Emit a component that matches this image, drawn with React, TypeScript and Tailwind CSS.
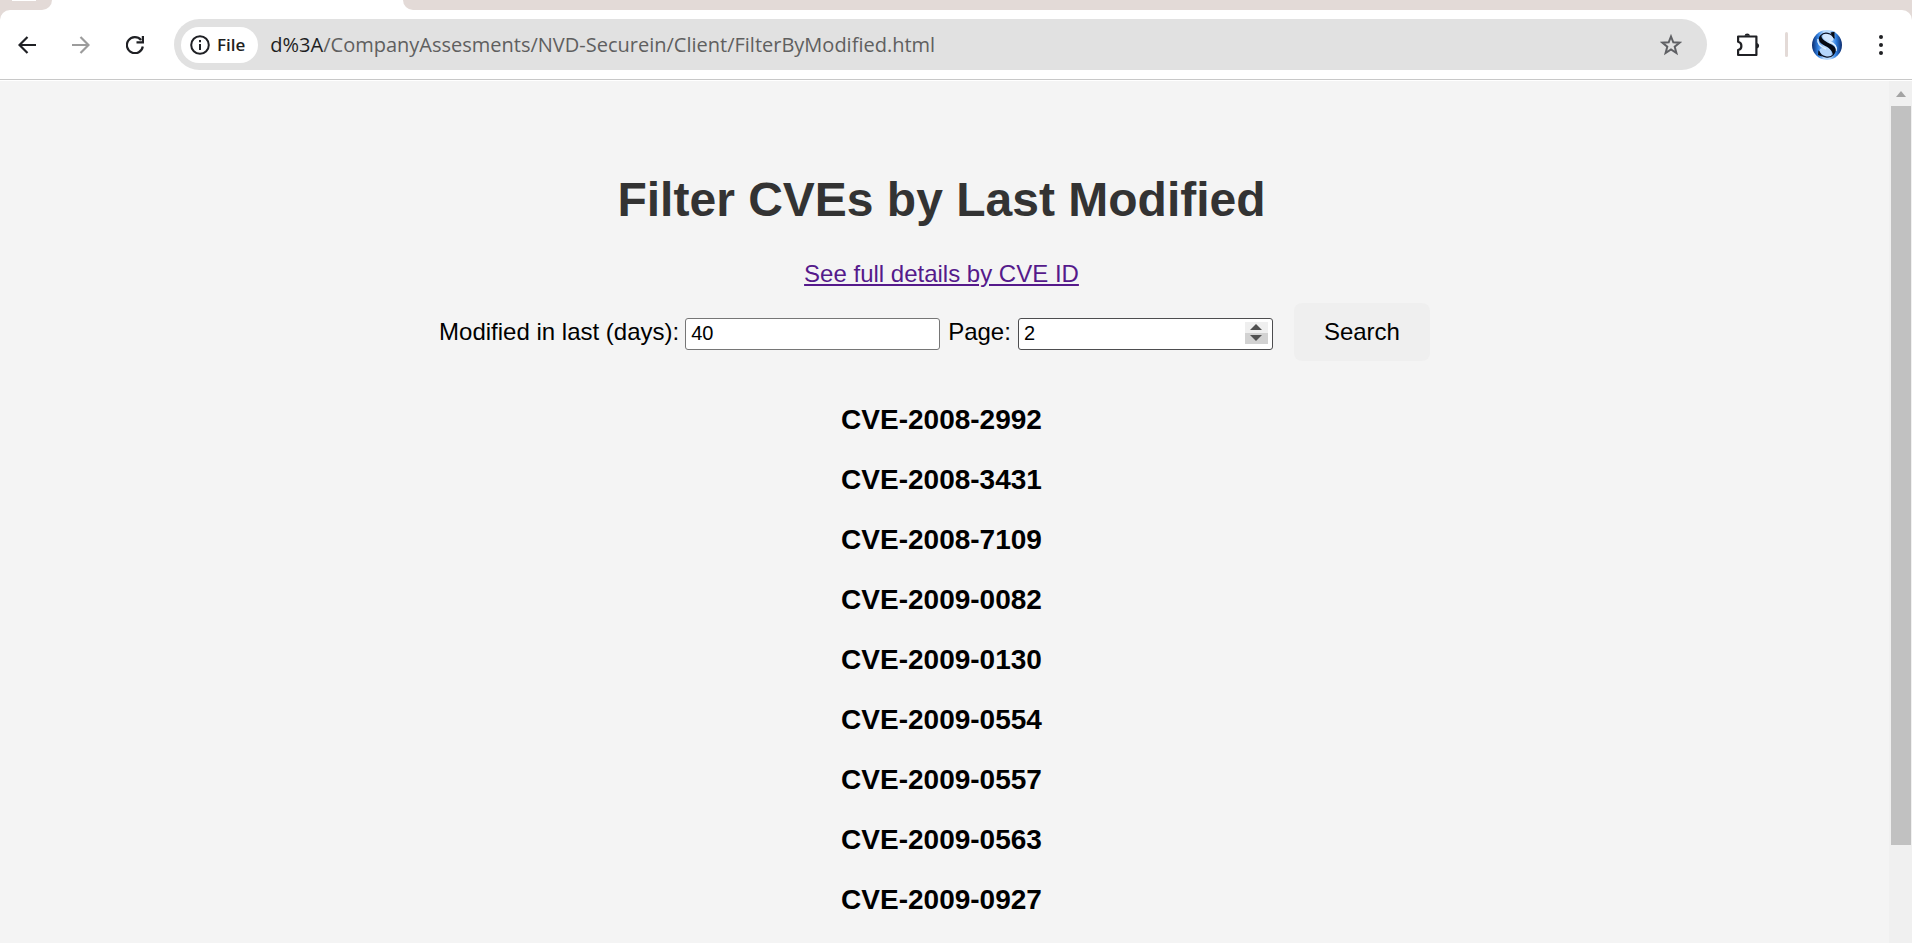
import React, { useState } from "react";

const CVES = [
  "CVE-2008-2992",
  "CVE-2008-3431",
  "CVE-2008-7109",
  "CVE-2009-0082",
  "CVE-2009-0130",
  "CVE-2009-0554",
  "CVE-2009-0557",
  "CVE-2009-0563",
  "CVE-2009-0927",
];

function TabStrip() {
  return (
    <div className="flex h-[10px] shrink-0 bg-white">
      <div className="w-[52px] rounded-br-[16px] bg-[#e3dad7]">
        <div className="ml-3 h-px w-6 bg-white" />
      </div>
      <div className="w-[351px]" />
      <div className="flex-1 rounded-bl-[16px] bg-[#e3dad7]" />
    </div>
  );
}

function Avatar() {
  return (
    <svg viewBox="0 0 30 30" className="size-[30px]" aria-hidden="true">
      <defs>
        <linearGradient id="orb" x1="0" y1="0" x2="1" y2="0">
          <stop offset="0" stopColor="#0b2a6b" />
          <stop offset="0.2" stopColor="#2f7fe0" />
          <stop offset="0.4" stopColor="#b9dbff" />
          <stop offset="0.6" stopColor="#b9dbff" />
          <stop offset="0.8" stopColor="#2f7fe0" />
          <stop offset="1" stopColor="#0b2a6b" />
        </linearGradient>
      </defs>
      <circle cx="15" cy="15" r="15" fill="url(#orb)" />
      <path d="M11 5C14 2.500 19 3 21.500 7.500C22 11 19 13 15 10.500C12 9 10 7.500 11 5Z" fill="#cfe5ff" />
      <path d="M8 19C11 17 16 18 19 22C20 26 16 28 12 26.500C9 25 7 22 8 19Z" fill="#b5d6fb" />
      <path d="M6 9C5 14 9 17 14 19M24 21C25.500 16 21 13 17 11.500" fill="none" stroke="#e3f1ff" strokeWidth="1.500" />
      <path d="M22 8C20 3 12 1.500 9 5.500M7 21.500C9 27.500 18 29 21.500 24.500" fill="none" stroke="#0b1226" strokeWidth="1.200" />
      <path d="M9.500 4.500C5.500 7 6 12 11.500 15C16 17.500 20.500 19.500 21 25.500C25 22 25 17.500 19.500 14.500C14 11.500 8.500 9.500 9.500 4.500Z" fill="#060a14" />
      <path d="M18.500 2.500L22.500 1.800V9.500ZM6.500 20L10 26.500L6 25Z" fill="#060a14" />
    </svg>
  );
}

function Toolbar() {
  return (
    <div className="shrink-0 bg-[#e3dad7]">
      <header className="flex h-[70px] items-center rounded-t-[10px] border-b border-[#c8c8c8] bg-white font-['Open_Sans',sans-serif]">
        <nav className="flex items-center gap-9 pl-[18px]" aria-label="Browser">
          <button type="button" aria-label="Back" className="size-[18px]">
            <svg viewBox="0 0 18 18" fill="none" stroke="#1f2024" strokeWidth="2.200"><path d="M18 9H1.600M9.500 1L1.500 9L9.500 17" /></svg>
          </button>
          <button type="button" aria-label="Forward" className="size-[18px]">
            <svg viewBox="0 0 18 18" fill="none" stroke="#9c9c9c" strokeWidth="2.200"><path d="M0 9H16.400M8.500 1L16.500 9L8.500 17" /></svg>
          </button>
          <button type="button" aria-label="Reload" className="size-[18px]">
            <svg viewBox="0 0 18 18" fill="none" stroke="#1f2024" strokeWidth="2.200"><path d="M15 4A8 8 0 1 0 16.800 10.500M16.900 0V6.400H10.500" /></svg>
          </button>
        </nav>
        <div className="ml-[30px] flex h-[51px] flex-1 items-center rounded-full bg-[#e1e1e1] pl-[7px] pr-[25px]">
          <button type="button" className="flex h-9 items-center gap-[7px] rounded-full bg-white pl-[9px] pr-[13px] text-[17px] font-semibold text-[#1f1f1f]">
            <svg viewBox="0 0 20 20" className="size-5" fill="none" stroke="#1f2024" strokeWidth="2" aria-hidden="true">
              <circle cx="10" cy="10" r="8.800" />
              <path d="M10 9V15M10 5V7.200" />
            </svg>
            File
          </button>
          <div className="ml-3 flex-1 text-[20px] text-[#5f5f5f]">
            <span className="text-[#1f1f1f]">d%3A</span>/CompanyAssesments/NVD-Securein/Client/FilterByModified.html
          </div>
          <button type="button" aria-label="Bookmark" className="size-[22px]">
            <svg viewBox="0 0 22 22" fill="none" stroke="#5f6064" strokeWidth="2"><path d="M11 2.500L13.300 8.300L19.600 8.700L14.700 12.700L16.400 19L11 15.500L5.600 19L7.300 12.700L2.400 8.700L8.700 8.300Z" /></svg>
          </button>
        </div>
        <div className="flex items-center pl-[29px] pr-[29px]">
          <button type="button" aria-label="Extensions" className="size-6">
            <svg viewBox="0 0 24 24" fill="none" stroke="#1f2024" strokeWidth="2.200"><path d="M2.100 3.500H20.400V22H2.100V17A4.200 4.200 0 0 0 2.100 8.800Z" strokeLinejoin="round" /><path d="M8.500 2.800A2.800 2.800 0 0 1 14 2.800ZM21 10A2.900 2.900 0 0 1 21 15.600Z" fill="#1f2024" stroke="none" /></svg>
          </button>
          <div className="ml-[25px] h-[25px] w-[3px] rounded-full bg-[#e3dad7]" />
          <button type="button" aria-label="Profile" className="ml-6">
            <Avatar />
          </button>
          <button type="button" aria-label="Menu" className="ml-[37px] h-[22px] w-1">
            <svg viewBox="0 0 4 22" fill="#1f2024"><circle cx="2" cy="3" r="2" /><circle cx="2" cy="11" r="2" /><circle cx="2" cy="19" r="2" /></svg>
          </button>
        </div>
      </header>
    </div>
  );
}

function SearchForm() {
  const [days, setDays] = useState("40");
  const [page, setPage] = useState(2);
  return (
    <form className="flex items-center justify-center" onSubmit={(e) => e.preventDefault()}>
      <label htmlFor="days">Modified in last (days):</label>
      <input
        id="days"
        type="text"
        value={days}
        onChange={(e) => setDays(e.target.value)}
        className="ml-[6px] mt-[3px] h-8 w-[255px] rounded-[3px] border border-[#767676] bg-white px-[5px] text-[20px]"
      />
      <label htmlFor="page" className="ml-2">Page:</label>
      <div className="relative ml-[7px] mt-[3px] h-8 w-[255px]">
        <input
          id="page"
          type="text"
          inputMode="numeric"
          value={page}
          onChange={(e) => setPage(Number(e.target.value) || 0)}
          className="block h-8 w-full rounded-[3px] border border-[#4d4d4f] bg-white px-[5px] text-[20px]"
        />
        <div className="absolute right-[5px] top-[4px] flex w-[23px] flex-col">
          <button type="button" aria-label="Next page" onClick={() => setPage(page + 1)} className="flex h-[11px] items-center justify-center bg-[#efefef]">
            <svg viewBox="0 0 12 6" className="h-[6px] w-3" fill="#505050"><path d="M0 6L6 0L12 6Z" /></svg>
          </button>
          <button type="button" aria-label="Previous page" onClick={() => setPage(page - 1)} className="flex h-[11px] items-center justify-center bg-[#d2d2d2]">
            <svg viewBox="0 0 12 6" className="h-[6px] w-3" fill="#505050"><path d="M0 0L6 6L12 0Z" /></svg>
          </button>
        </div>
      </div>
      <button type="submit" className="ml-[21px] mr-[14px] h-[58px] rounded-[8px] bg-[#efefef] px-[30px]">Search</button>
    </form>
  );
}

function Scrollbar() {
  return (
    <div className="flex w-[23px] shrink-0 flex-col items-center bg-[#f0f0f0]" aria-hidden="true">
      <div className="flex h-[25px] items-center">
        <svg viewBox="0 0 10 6" className="h-[6px] w-[10px]" fill="#a3a3a3"><path d="M0 6L5 0L10 6Z" /></svg>
      </div>
      <div className="h-6/7 w-5 bg-[#c1c1c1]" />
    </div>
  );
}

export default function App() {
  return (
    <div className="flex h-screen flex-col overflow-hidden bg-[#f4f4f4]">
      <TabStrip />
      <Toolbar />
      <div className="flex min-h-0 flex-1 border-t border-white">
        <main className="flex-1 overflow-hidden pr-[6px] pt-[91px] text-center font-['Liberation_Sans',Arial,sans-serif] text-2xl leading-7 text-black">
          <h1 className="text-5xl font-bold leading-[56px] text-[#333]">Filter CVEs by Last Modified</h1>
          <a href="#details" className="mt-8 inline-block text-[#551a8b] underline">See full details by CVE ID</a>
          <div className="mt-[15px]">
            <SearchForm />
          </div>
          <ul className="mt-[43px] flex flex-col gap-7 text-[28px] font-bold leading-8">
            {CVES.map((id) => (
              <li key={id}>{id}</li>
            ))}
          </ul>
        </main>
        <Scrollbar />
      </div>
    </div>
  );
}
